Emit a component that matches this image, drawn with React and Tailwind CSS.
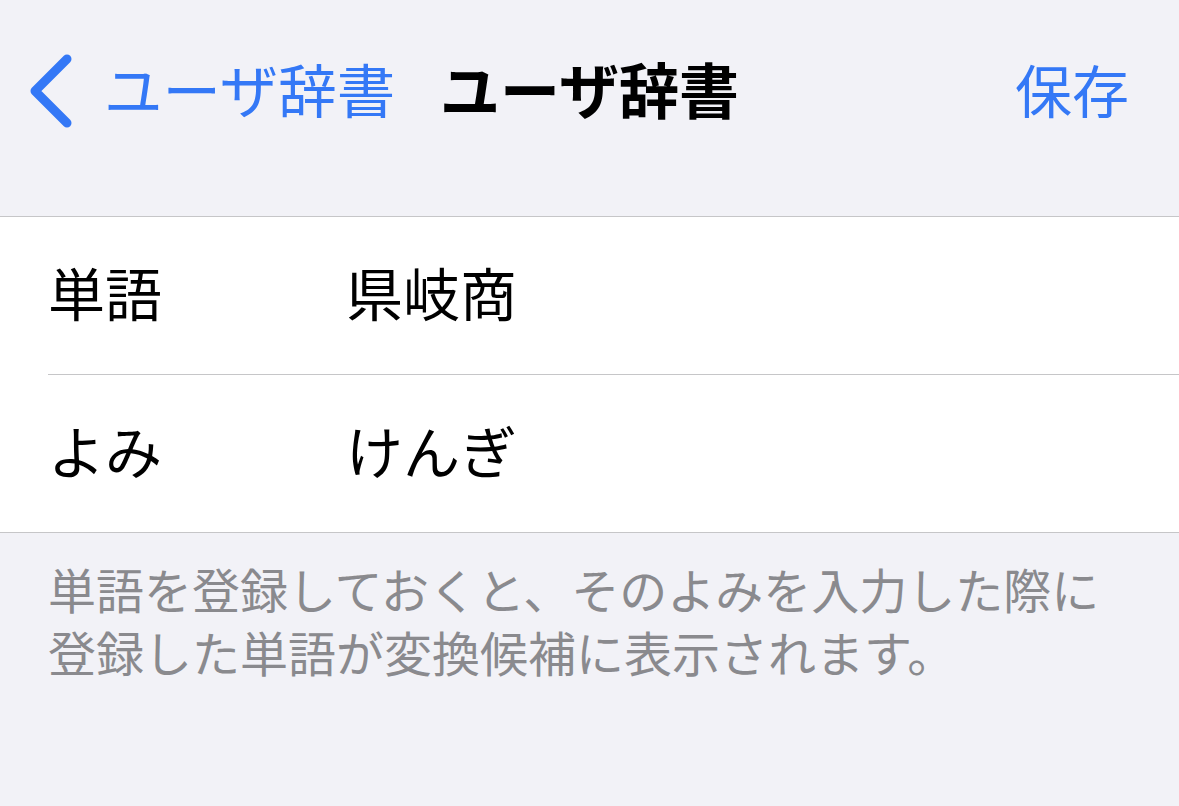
export default function App() {
  const rows = [
    { label: '単語', value: '県岐商' },
    { label: 'よみ', value: 'けんぎ' },
  ];

  return (
    <div
      className="min-h-[806px] w-full bg-[#f2f2f7] text-black"
      style={{ fontFamily: '"Noto Sans CJK JP", "Noto Sans", sans-serif' }}
    >
      {/* Nav bar */}
      <div className="grid h-[186px] grid-cols-[1fr_auto_1fr] items-center pb-[10px]">
        <div className="flex items-center gap-[31px] pl-[29px] text-[#3478f6]">
          <svg width="44" height="74" viewBox="0 0 44 74" fill="none" className="mt-[6px] shrink-0">
            <path d="M38 5 L6 37 L38 69" stroke="#3478f6" strokeWidth="9" strokeLinecap="round" strokeLinejoin="round" />
          </svg>
          <span className="text-[58.5px] leading-none">ユーザ辞書</span>
        </div>
        <div className="text-[60px] font-bold leading-none">ユーザ辞書</div>
        <div className="flex justify-end pr-[50px] text-[57px] leading-none text-[#3478f6]">保存</div>
      </div>

      {/* Group */}
      <div className="mt-[30px] border-y border-[#c6c6c8] bg-white">
        {rows.map((row, i) => (
          <div key={row.label} className={i > 0 ? 'ml-[48px] border-t border-[#c6c6c8]' : 'ml-[48px]'}>
            <div className="flex h-[157px] items-center pb-[9px] text-[57px] leading-none">
              <span className="w-[298px] shrink-0">{row.label}</span>
              <span>{row.value}</span>
            </div>
          </div>
        ))}
      </div>

      {/* Footer note */}
      <div className="flex flex-col gap-[15px] px-[48px] pt-[31px] text-[48px] leading-none text-[#8a8a8e]">
        <p>単語を登録しておくと、そのよみを入力した際に</p>
        <p>登録した単語が変換候補に表示されます。</p>
      </div>
    </div>
  );
}
